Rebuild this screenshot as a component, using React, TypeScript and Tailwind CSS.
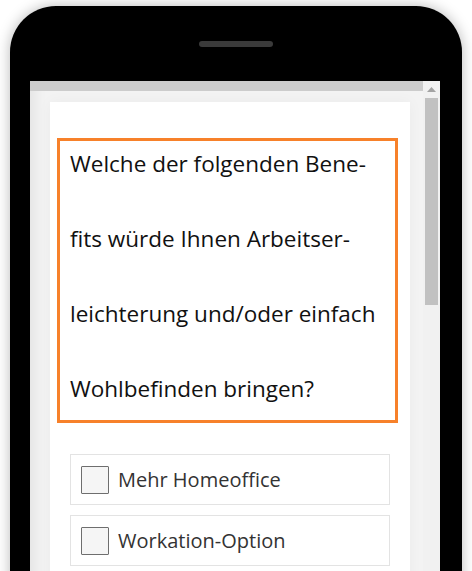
import React from "react";

const options = ["Mehr Homeoffice", "Workation-Option"];

const lines = [
  "Welche der folgenden Bene-",
  "fits würde Ihnen Arbeitser-",
  "leichterung und/oder einfach",
  "Wohlbefinden bringen?",
];

const App: React.FC = () => {
  return (
    <div
      className="w-[472px] h-[571px] overflow-hidden bg-white pt-[6px] px-[10px]"
      style={{ fontFamily: '"Open Sans", "Liberation Sans", sans-serif' }}
    >
      <div className="w-[452px] h-[640px] bg-black rounded-t-[46px] shadow-[0_0_14px_rgba(0,0,0,0.28)] px-[20px] pt-[35px] flex flex-col">
        <div className="mx-auto w-[74px] h-[6px] rounded-full bg-[#3a3a3a]" />
        <div className="mt-[34px] flex flex-1 w-[410px]">
          {/* main viewport */}
          <div className="flex-1 flex flex-col bg-[#f3f3f3] shadow-[inset_14px_0_14px_-10px_rgba(0,0,0,0.07)]">
            <div className="h-[10px] bg-[#cccccc]" />
            <div className="flex-1 pl-[20px] pr-[13px] pt-[11px]">
              <div className="h-full bg-white shadow-[0_0_14px_rgba(0,0,0,0.04)] pt-[36px] pl-[7px] pr-[12px]">
                <div className="h-[285px] border-[3px] border-[#f7812a] pl-[10px]">
                  <div className="-mt-[15px] text-[22.5px] leading-[75px] text-[#111]">
                    {lines.map((l) => (
                      <div key={l} className="whitespace-nowrap">
                        {l}
                      </div>
                    ))}
                  </div>
                </div>
                <div className="mt-[31px] ml-[13px] mr-[8px] flex flex-col gap-[10px]">
                  {options.map((o) => (
                    <label
                      key={o}
                      className="h-[51px] border border-[#e3e3e3] flex items-center px-[10px] gap-[9px]"
                    >
                      <span className="w-[28px] h-[28px] border-[1.5px] border-[#6e6e6e] bg-[#f5f5f5] rounded-[1px]" />
                      <span className="text-[20px] text-[#333]">{o}</span>
                    </label>
                  ))}
                </div>
              </div>
            </div>
          </div>
          {/* scrollbar */}
          <div className="w-[17px] bg-[#f1f1f1] flex flex-col items-center pt-[6px]">
            <svg width="9" height="5" viewBox="0 0 9 5">
              <path d="M4.5 0 L9 5 L0 5 Z" fill="#a3a3a3" />
            </svg>
            <div className="mt-[6px] w-[13px] h-[207px] bg-[#c1c1c1]" />
          </div>
        </div>
      </div>
    </div>
  );
};

export default App;
